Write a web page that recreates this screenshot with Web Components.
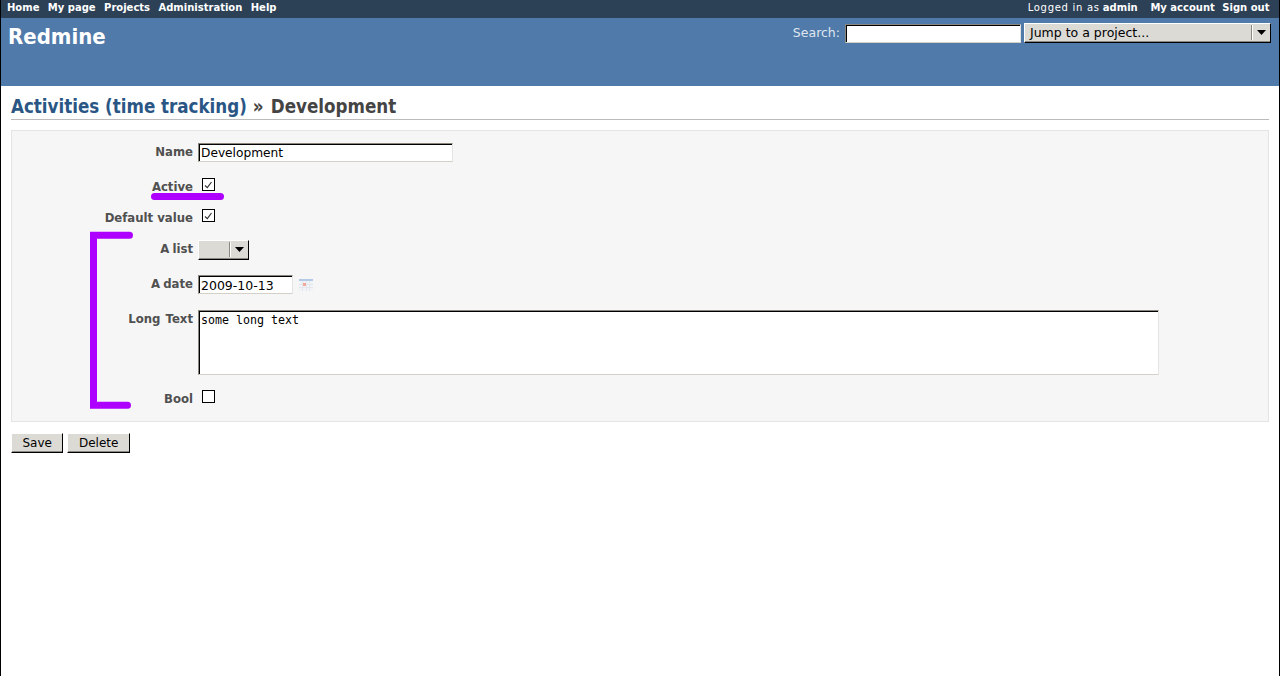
<!DOCTYPE html>
<html>
<head>
<meta charset="utf-8">
<title>Redmine</title>
<style>
html, body { margin: 0; height: 100%; background: #fff; }
body { font-family: "DejaVu Sans", sans-serif; font-size: 12px; color: #484848; }
</style>
</head>
<body>
<rm-app></rm-app>
<script>
// Barra superior
class RmTopMenu extends HTMLElement {
    constructor() {
        super();
        this.attachShadow({ mode: 'open' });
        this.shadowRoot.innerHTML = `
            <style>
                :host { display: flex; justify-content: space-between; height: 18px; background: #2C4056; color: #fff; font-size: 10px; line-height: 15px; padding: 0 9.500px 0 6px; }
                a { color: #fff; font-weight: bold; text-decoration: none; }
                .left a { margin-right: 8.400px; }
                .right a { margin-left: 7.500px; }
                .who { letter-spacing: .7px; }
                b { margin-right: 2px; }
            </style>
            <div class="left"><a>Home</a><a>My page</a><a>Projects</a><a>Administration</a><a>Help</a></div>
            <div class="right"><span class="who">Logged in as</span> <b>admin</b> <a>My account</a><a>Sign out</a></div>
        `;
    }
}

// Cabecera azul
class RmHeader extends HTMLElement {
    constructor() {
        super();
        this.attachShadow({ mode: 'open' });
        this.shadowRoot.innerHTML = `
            <style>
                :host { display: flex; justify-content: space-between; height: 68px; background: #507AAA; color: #fff; padding: 0 8px 0 7px; }
                h1 { margin: 3px 0 0; font-family: "DejaVu Sans Condensed", "DejaVu Sans", sans-serif; font-stretch: condensed; font-size: 22px; line-height: 32px; font-weight: bold; }
                .search { display: flex; align-items: flex-start; gap: 5px; padding-top: 5px; font-size: 12.5px; color: #dfe6ef; line-height: 19px; }
                rm-input { margin-top: 1px; }
                rm-select { margin-left: -2px; }
            </style>
            <h1>Redmine</h1>
            <div class="search">
                <span>Search:</span>
                <rm-input style="width:176px;height:19px"></rm-input>
                <rm-select style="width:247px;height:20px">Jump to a project...</rm-select>
            </div>
        `;
    }
}

// Caja de texto con borde inset
class RmInput extends HTMLElement {
    constructor() {
        super();
        this.attachShadow({ mode: 'open' });
        this.shadowRoot.innerHTML = `
            <style>
                :host { display: block; box-sizing: border-box; background: #fff; border: 1px solid; border-color: #8a867c #e4e4e0 #d4d0c8 #8a867c; color: #000; font-size: 12.500px; line-height: 15px; overflow: hidden; }
                div { height: 100%; box-sizing: border-box; border-top: 1px solid #000; border-left: 1px solid #000; padding: 1px 0 0 1px; white-space: pre; }
            </style>
            <div><slot></slot></div>
        `;
    }
}

// Desplegable con su flecha
class RmSelect extends HTMLElement {
    constructor() {
        super();
        this.attachShadow({ mode: 'open' });
        this.shadowRoot.innerHTML = `
            <style>
                :host { display: flex; box-sizing: border-box; background: #dcdad5; border: 1px solid; border-color: #fff #000 #000 #fff; color: #000; font-size: 12.500px; line-height: 17px; box-shadow: inset 0 -1px 0 #8b8982; }
                .text { flex: 1; padding-left: 5px; white-space: pre; }
                .arrow { display: flex; align-items: center; justify-content: center; width: 18px; margin: 1px 0 2px; border-left: 1px solid #8b8982; box-shadow: inset 1px 0 0 #fff; }
            </style>
            <span class="text"><slot></slot></span>
            <span class="arrow"><svg width="9" height="5"><path d="M0 0h9L4.500 5z" fill="#000"/></svg></span>
        `;
    }
}

// Casilla marcada o no
class RmCheck extends HTMLElement {
    constructor() {
        super();
        this.attachShadow({ mode: 'open' });
        const mark = this.hasAttribute('checked') ? '<path d="M3 7.500L5.300 9.700L9.500 4" fill="none" stroke="#333" stroke-width="1.200"/>' : '';
        this.shadowRoot.innerHTML = `
            <style>
                :host { display: block; width: 13px; height: 13px; margin-left: 4px; }
                svg { display: block; }
            </style>
            <svg width="13" height="13"><rect x=".5" y=".5" width="12" height="12" fill="#fff" stroke="#000"/>${mark}</svg>
        `;
    }
}

// Fila del formulario: etiqueta a la derecha y campo
class RmField extends HTMLElement {
    constructor() {
        super();
        this.attachShadow({ mode: 'open' });
        this.shadowRoot.innerHTML = `
            <style>
                :host { display: flex; align-items: flex-start; }
                label { width: 181px; height: 0; margin-top: var(--label-top, 0); word-spacing: var(--label-ws, 0); text-align: right; font-weight: bold; font-size: 11.700px; line-height: 14px; color: #505050; flex: none; white-space: nowrap; }
                .ctl { margin-left: 5px; display: flex; align-items: flex-start; gap: 6px; }
            </style>
            <label>${this.getAttribute('label')}</label>
            <div class="ctl"><slot></slot></div>
        `;
    }
}

// Marcas violetas encima del formulario
class RmMarks extends HTMLElement {
    constructor() {
        super();
        this.attachShadow({ mode: 'open' });
        this.shadowRoot.innerHTML = `
            <style>
                :host { position: absolute; left: -1px; top: 0; width: 0; height: 0; }
                svg { position: absolute; left: 0; top: 0; overflow: visible; }
            </style>
            <svg width="1280" height="676" fill="none" stroke="#AE00FF" stroke-width="7" stroke-linejoin="miter" stroke-linecap="round">
                <path d="M154.500 196.500H220.500"/>
                <path d="M129.500 235.200H93.500V405.300H127.500"/>
            </svg>
        `;
    }
}

// Pagina completa
class RmApp extends HTMLElement {
    constructor() {
        super();
        this.attachShadow({ mode: 'open' });
        this.shadowRoot.innerHTML = `
            <style>
                :host { display: block; position: relative; box-sizing: border-box; height: 100vh; overflow: hidden; border-left: 1px solid #000; border-right: 1px solid #000; }
                .content { padding: 10px 10px 0; }
                h2 { margin: 0 0 10px; font-family: "DejaVu Sans Condensed", "DejaVu Sans", sans-serif; font-stretch: condensed; font-size: 18.600px; line-height: 21px; height: 23px; border-bottom: 1px solid #bbb; color: #444; font-weight: bold; }
                h2 a { color: #2A5685; }
                h2 span { color: #444; word-spacing: 1.500px; }
                .box { box-sizing: border-box; height: 292px; margin-bottom: 11px; padding-top: 12px; background: #F6F6F6; border: 1px solid #E4E4E4; }
                .f-name { margin-bottom: 16px; --label-top: 2px; }
                .f-active { margin-bottom: 18px; --label-top: 2px; }
                .f-default { margin-bottom: 18px; --label-top: 2px; }
                .f-list { margin-bottom: 15px; --label-top: 2px; --label-ws: -1px; }
                .f-date { margin-bottom: 16px; --label-top: 2px; --label-ws: -1px; }
                .f-long { margin-bottom: 15px; --label-top: 2px; --label-ws: 1px; }
                .f-bool { --label-top: 2px; }
                .cal { display: block; margin-top: 4px; }
                button { box-sizing: border-box; height: 20px; padding: 0 10.500px; margin: 0 4px 0 0; font: 12px "DejaVu Sans", sans-serif; color: #000; background: #dcdad5; border: 1px solid; border-color: #fff #000 #000 #fff; box-shadow: inset 0 -1px 0 #8b8982; }
            </style>
            <rm-top-menu></rm-top-menu>
            <rm-header></rm-header>
            <div class="content">
                <h2><a>Activities (time tracking)</a> <span>» Development</span></h2>
                <div class="box">
                    <rm-field class="f-name" label="Name"><rm-input style="width:255px;height:19px;font-size:12.200px">Development</rm-input></rm-field>
                    <rm-field class="f-active" label="Active"><rm-check checked></rm-check></rm-field>
                    <rm-field class="f-default" label="Default value"><rm-check checked></rm-check></rm-field>
                    <rm-field class="f-list" label="A list"><rm-select style="width:51px;height:20px"></rm-select></rm-field>
                    <rm-field class="f-date" label="A date">
                        <rm-input style="width:95px;height:19px">2009-10-13</rm-input>
                        <svg class="cal" width="14" height="12" viewBox="0 0 14 12">
                            <rect width="14" height="12" fill="#f1f3f6"/>
                            <rect width="14" height="2" fill="#b3cbe6"/>
                            <path d="M0 5.500H14M0 8.500H14M3.500 2V12M7.500 2V12M10.500 2V12" stroke="#e4e8ee" stroke-width="1"/>
                            <rect x="4" y="4" width="3" height="3" fill="#f2a898"/>
                        </svg>
                    </rm-field>
                    <rm-field class="f-long" label="Long Text">
                        <rm-input style="width:961px;height:65px;font:11.630px/14px 'DejaVu Sans Mono',monospace">some long text</rm-input>
                    </rm-field>
                    <rm-field class="f-bool" label="Bool"><rm-check></rm-check></rm-field>
                </div>
                <button>Save</button><button>Delete</button>
            </div>
            <rm-marks></rm-marks>
        `;
    }
}

customElements.define('rm-top-menu', RmTopMenu);
customElements.define('rm-header', RmHeader);
customElements.define('rm-input', RmInput);
customElements.define('rm-select', RmSelect);
customElements.define('rm-check', RmCheck);
customElements.define('rm-field', RmField);
customElements.define('rm-marks', RmMarks);
customElements.define('rm-app', RmApp);
</script>
</body>
</html>
